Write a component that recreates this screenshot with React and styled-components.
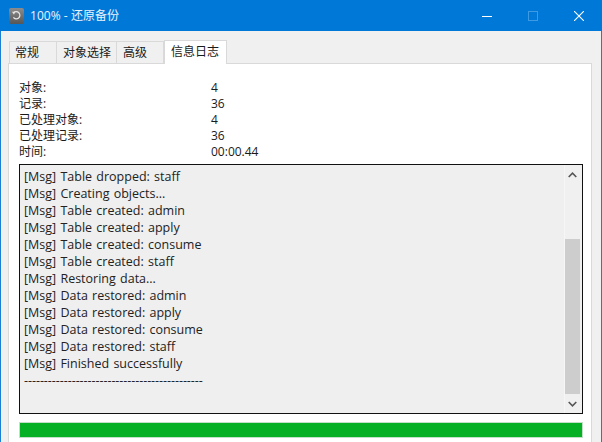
import React from "react";
import styled, { createGlobalStyle } from "styled-components";

const Global = createGlobalStyle`
  html, body { margin: 0; padding: 0; background: #f0f0f0; overflow: hidden; }
  #root { width: 602px; height: 442px; }
  * { box-sizing: border-box; }
`;

const FONT = `"Open Sans", "Noto Sans CJK SC", sans-serif`;

const Win = styled.div`
  width: 602px; height: 442px;
  display: flex; flex-direction: column;
  border-left: 1px solid #1b7fd4; border-right: 1px solid #1b7fd4;
  background: #f0f0f0;
  font: 12px/16px ${FONT};
  color: #1a1a1a;
`;
const TitleBar = styled.div`
  height: 31px; flex: none;
  margin: 0 -1px;
  background: #0078d7;
  display: flex; align-items: center;
  padding-left: 9px;
  color: #fff;
`;
const AppIcon = styled.svg`width: 15px; height: 16px; flex: none; margin-right: 6px;`;
const Title = styled.div`font-size: 12px; line-height: 16px; flex: 1; color: #e8f4ff; letter-spacing: 0.05px;`;
const WinBtn = styled.div`
  width: 46px; height: 31px; flex: none;
  display: flex; align-items: center; justify-content: center;
`;
const Body = styled.div`
  flex: 1; min-height: 0;
  padding: 8px 9px 0 7px;
  display: flex; flex-direction: column;
`;
const Tabs = styled.div`
  height: 24px; flex: none;
  display: flex; align-items: flex-end;
  position: relative; z-index: 1;
  padding-left: 1px;
`;
const Tab = styled.div`
  width: ${p => p.$w}px;
  height: ${p => (p.$active ? 24 : 22)}px;
  padding-left: ${p => p.$pad}px;
  background: ${p => (p.$active ? "#fff" : "#f0f0f0")};
  border: 1px solid #d9d9d9;
  border-left-width: ${p => (p.$first || p.$active ? 1 : 0)}px;
  border-bottom: 0;
  line-height: 21px;
  font-size: 12px;
  white-space: nowrap;
  margin-bottom: ${p => (p.$active ? -1 : 0)}px;
`;
const Panel = styled.div`
  flex: 1; min-height: 0;
  background: #fff;
  border: 1px solid #d9d9d9;
  border-bottom: 0;
  padding: 16px 9px 0 10px;
  display: flex; flex-direction: column;
`;
const Info = styled.div`
  display: grid;
  grid-template-columns: 192px 1fr;
  grid-auto-rows: 16px;
  height: 80px;
  margin-bottom: 4px;
  flex: none;
`;
const LogBox = styled.div`
  width: 564px; height: 250px; flex: none;
  border: 1px solid #111;
  background: #efefef;
  display: flex;
`;
const LogText = styled.div`
  flex: 1;
  padding: 3px 0 0 4px;
  line-height: 17px;
  font-size: 12.5px;
  word-spacing: 1px;
  color: #222;
  white-space: pre;
`;
const Rule = styled.div`
  letter-spacing: -0.05px;
`;
const ScrollBar = styled.div`
  width: 17px; flex: none;
  display: flex; flex-direction: column;
  background: #f0f0f0;
  box-shadow: -1px 0 0 #f6f6f6;
`;
const ScrollBtn = styled.div`
  height: 19px; flex: none;
  padding-right: 2px;
  display: flex; align-items: center; justify-content: center;
`;
const Track = styled.div`flex: 1; display: flex; flex-direction: column; padding-top: 55px;`;
const Thumb = styled.div`flex: 1; background: #cdcdcd; margin-right: 2px;`;
const Progress = styled.div`
  width: 564px; height: 16px; flex: none;
  margin-top: 8px;
  border: 1px solid #c4dfc8;
  background: #06b025;
`;

const info = [["对象:", "4"], ["记录:", "36"], ["已处理对象:", "4"], ["已处理记录:", "36"], ["时间:", "00:00.44"]];
const log = [
  "[Msg] Table dropped: staff",
  "[Msg] Creating objects...",
  "[Msg] Table created: admin",
  "[Msg] Table created: apply",
  "[Msg] Table created: consume",
  "[Msg] Table created: staff",
  "[Msg] Restoring data...",
  "[Msg] Data restored: admin",
  "[Msg] Data restored: apply",
  "[Msg] Data restored: consume",
  "[Msg] Data restored: staff",
  "[Msg] Finished successfully",
];

export default function App() {
  return (
    <Win>
      <Global />
      <TitleBar>
        <AppIcon viewBox="0 0 15 16">
          <defs>
            <linearGradient id="ico" x1="0" y1="0" x2="0" y2="1">
              <stop offset="0" stopColor="#8c8c8c" />
              <stop offset="1" stopColor="#565656" />
            </linearGradient>
          </defs>
          <rect x="0" y="0" width="15" height="16" rx="2" fill="url(#ico)" />
          <path d="M4.6 4.8 A3.6 3.6 0 1 1 4.4 9.4" fill="none" stroke="#e6e6e6" strokeWidth="1.2" />
          <path d="M3 3.8 L6.2 3.8 L5 6.8 Z" fill="#e6e6e6" />
        </AppIcon>
        <Title>100% - 还原备份</Title>
        <WinBtn>
          <svg width="10" height="10" viewBox="0 0 10 10"><path d="M0 5.5H10" stroke="#fff" strokeWidth="1" /></svg>
        </WinBtn>
        <WinBtn>
          <svg width="10" height="10" viewBox="0 0 10 10"><rect x="0.5" y="0.5" width="9" height="9" fill="none" stroke="#3d9be6" /></svg>
        </WinBtn>
        <WinBtn>
          <svg width="10" height="10" viewBox="0 0 10 10"><path d="M0 0L10 10M10 0L0 10" stroke="#fff" strokeWidth="1.1" /></svg>
        </WinBtn>
      </TitleBar>
      <Body>
        <Tabs>
          <Tab $first $w={48} $pad={5}>常规</Tab>
          <Tab $w={60} $pad={6}>对象选择</Tab>
          <Tab $w={47} $pad={6}>高级</Tab>
          <Tab $active $w={63} $pad={6}>信息日志</Tab>
        </Tabs>
        <Panel>
          <Info>
            {info.map(([k, v]) => (
              <React.Fragment key={k}>
                <span>{k}</span>
                <span>{v}</span>
              </React.Fragment>
            ))}
          </Info>
          <LogBox>
            <LogText>
              {log.map(line => <div key={line}>{line}</div>)}
              <Rule>---------------------------------------------</Rule>
            </LogText>
            <ScrollBar>
              <ScrollBtn>
                <svg width="9" height="6" viewBox="0 0 9 6"><path d="M0.7 5L4.5 1.2L8.3 5" fill="none" stroke="#555" strokeWidth="1.6" /></svg>
              </ScrollBtn>
              <Track><Thumb /></Track>
              <ScrollBtn>
                <svg width="9" height="6" viewBox="0 0 9 6"><path d="M0.7 1L4.5 4.8L8.3 1" fill="none" stroke="#555" strokeWidth="1.6" /></svg>
              </ScrollBtn>
            </ScrollBar>
          </LogBox>
          <Progress />
        </Panel>
      </Body>
    </Win>
  );
}
